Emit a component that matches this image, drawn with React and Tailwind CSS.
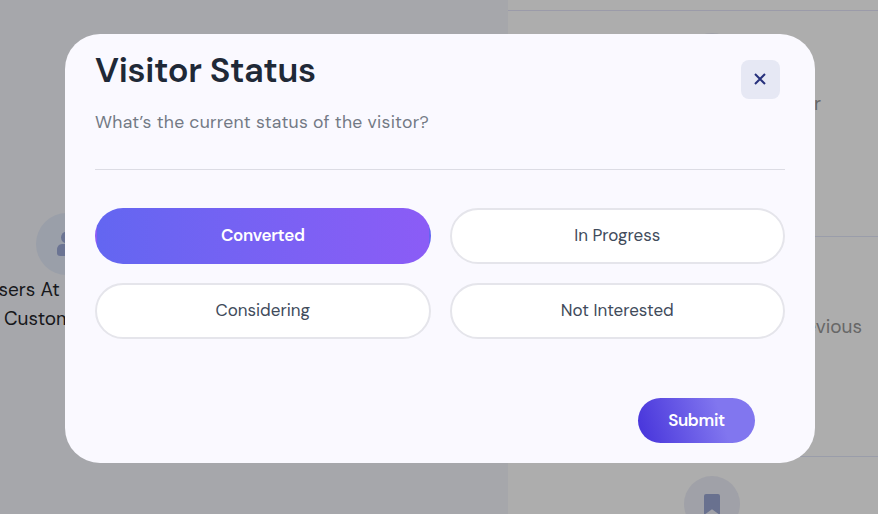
import React from "react";

const statuses = ["Converted", "In Progress", "Considering", "Not Interested"];

function Backdrop() {
  return (
    <div className="flex h-full w-full text-[19px] leading-[29px]">
      <div className="w-[508px] shrink-0 bg-[#a6a7ab] pt-[213px]">
        <div className="ml-9 flex h-[62px] w-[62px] items-center justify-center rounded-full bg-[#9a9fa9]">
          <svg width="22" height="24" viewBox="0 0 22 24" fill="#6b7493">
            <circle cx="11" cy="5.5" r="6" />
            <path d="M1 18.5Q1 12 6 12H16Q21 12 21 18.5V21Q21 24 18 24H4Q1 24 1 21Z" />
          </svg>
        </div>
        <div className="-ml-[14px] whitespace-nowrap text-[#17181b]">Users At</div>
        <div className="ml-1 whitespace-nowrap text-[#17181b]">Customer</div>
      </div>
      <div className="flex grow flex-col bg-[#adadad] text-[#676767]">
        <div className="h-[11px] shrink-0 border-b border-[#9b9ba9]" />
        <div className="flex h-[226px] shrink-0 flex-col border-b border-[#9a9daa]">
          <div className="ml-44 mt-[22px] h-14 w-14 shrink-0 rounded-full bg-[#a0a1a8]" />
          <div className="mr-[57px] text-right">Visitor</div>
        </div>
        <div className="flex h-[220px] shrink-0 flex-col border-b border-[#9a9daa]">
          <div className="ml-44 mt-[19px] h-14 w-14 shrink-0 rounded-full bg-[#a0a1a8]" />
          <div className="mr-[16px] text-right">Previous</div>
        </div>
        <div className="ml-44 mt-[19px] flex h-14 w-14 shrink-0 justify-center rounded-full bg-[#a0a1a8] pt-[18px]">
          <svg width="16" height="21" viewBox="0 0 16 21" fill="#69718f">
            <path d="M0 2Q0 0 2 0H14Q16 0 16 2V21L8 15.3L0 21Z" />
          </svg>
        </div>
      </div>
    </div>
  );
}

export default function App() {
  return (
    <div className="relative h-[514px] w-[878px] overflow-hidden font-['DM_Sans',Inter,sans-serif]">
      <Backdrop />
      <div className="absolute left-[65px] top-[34px] flex h-[429px] w-[750px] flex-col rounded-[35px] bg-[#faf9ff] px-[30px]">
        <div className="flex h-[136px] shrink-0 justify-between border-b border-[#dcdce4]">
          <div className="pt-4">
            <h1 className="whitespace-nowrap text-[34.5px] font-semibold leading-[42px] tracking-[-0.33px] text-[#1f2937]">
              Visitor Status
            </h1>
            <p className="mt-[17px] whitespace-nowrap text-[17.6px] leading-[26px] tracking-[0.26px] text-[#737985]">
              What’s the current status of the visitor?
            </p>
          </div>
          <button aria-label="Close" className="mr-[5px] mt-[26px] flex h-[39px] w-[39px] items-center justify-center rounded-lg bg-[#e6e8f4] pb-px pr-px">
            <svg width="12" height="12" viewBox="0 0 12 12" fill="none" stroke="#27317c" strokeWidth="2">
              <path d="M1 1L11 11M11 1L1 11" />
            </svg>
          </button>
        </div>
        <div className="mt-[38px] grid grid-cols-2 gap-[19px]">
          {statuses.map((s, i) => (
            <button
              key={s}
              className={`h-14 rounded-full border-2 pb-[2px] text-[17px] leading-6 ${
                i === 0
                  ? "border-transparent bg-linear-to-r from-[#6366f1] to-[#8b5cf6] font-semibold tracking-[-0.35px] text-white"
                  : "border-[#e5e5eb] bg-white text-[#414b5b]"
              }`}
            >
              {s}
            </button>
          ))}
        </div>
        <button className="mr-[30px] mt-[59px] h-[45px] w-[117px] self-end rounded-full bg-[linear-gradient(72deg,#4532da_0%,#8176ef_70%)] text-[17px] font-semibold tracking-[-0.35px] text-white">
          Submit
        </button>
      </div>
    </div>
  );
}
